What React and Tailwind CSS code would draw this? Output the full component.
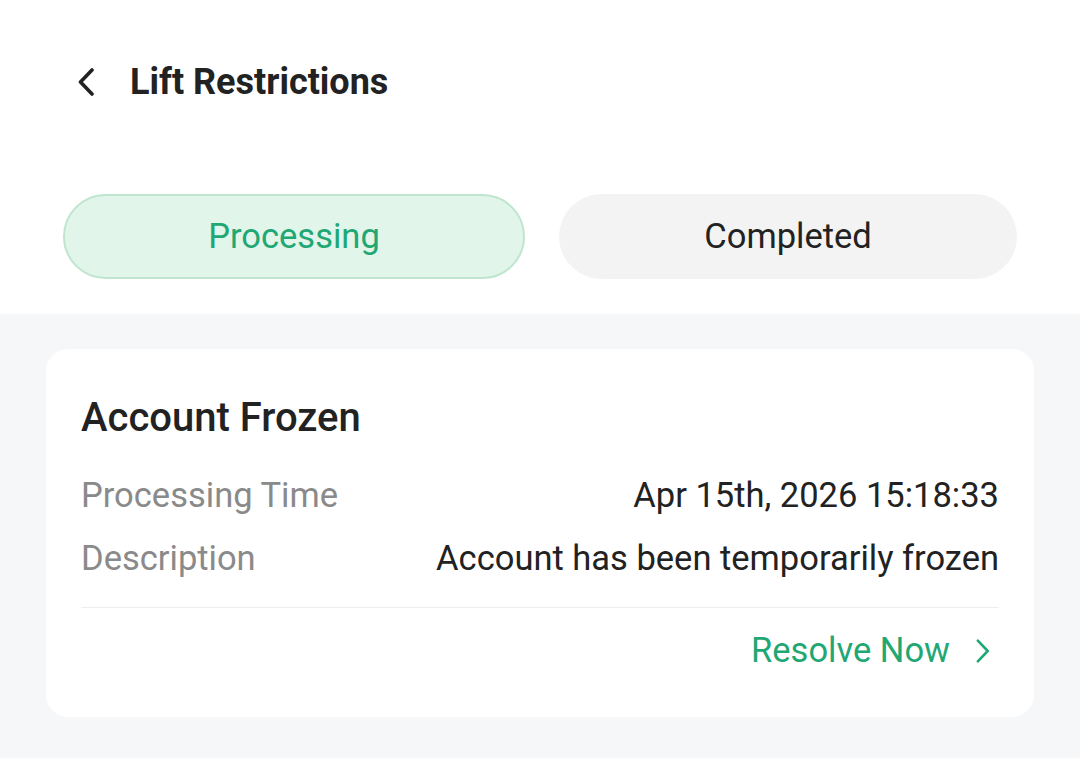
import React from 'react';

const Chevron = ({ dir = 'right', className = '', width = 3 }) => (
  <svg viewBox="0 0 16 28" className={className} fill="none" stroke="currentColor" strokeWidth={width} strokeLinecap="round" strokeLinejoin="round">
    {dir === 'left' ? <path d="M14 2 L2.5 14 L14 26" /> : <path d="M2 2 L13.5 14 L2 26" />}
  </svg>
);

const InfoRow = ({ label, value }) => (
  <div className="flex items-center justify-between leading-[63px]">
    <span className="text-[#8a8a8a]">{label}</span>
    <span className="text-[#222]">{value}</span>
  </div>
);

export default function App() {
  return (
    <div className="w-[1080px] h-[758px] bg-[#f6f7f9] font-['Roboto',sans-serif] text-[34.5px] overflow-hidden">
      {/* Header + tabs */}
      <div className="bg-white">
        <div className="h-[164px] flex items-center pl-[78px]">
          <Chevron dir="left" width={3.6} className="w-[16px] h-[28px] text-[#222]" />
          <h1 className="ml-[36px] font-bold text-[#222] text-[36px]">Lift Restrictions</h1>
        </div>
        <div className="flex gap-[34px] px-[63px] pt-[30px] pb-[35px]">
          <button className="flex-1 h-[85px] rounded-full bg-[#e1f5ea] border-2 border-[#bfe5cf] text-[#1fa774]">
            Processing
          </button>
          <button className="flex-1 h-[85px] rounded-full bg-[#f3f3f3] text-[#222]">
            Completed
          </button>
        </div>
      </div>

      {/* List */}
      <div className="px-[46px] pt-[35px]">
        <div className="bg-white rounded-[22px] px-[35px] pt-[47px] pb-[42px]">
          <h2 className="text-[40px] font-medium text-[#222] leading-[44px]">Account Frozen</h2>
          <div className="mt-[24px]">
            <InfoRow label="Processing Time" value="Apr 15th, 2026 15:18:33" />
            <InfoRow label="Description" value="Account has been temporarily frozen" />
          </div>
          <div className="mt-[17px] h-px bg-[#eeeeee]" />
          <div className="mt-[19px] h-[48px] flex items-center justify-end gap-[26px] pr-[9px] text-[#1fa774]">
            <span>Resolve Now</span>
            <Chevron width={3} className="w-[14px] h-[24px]" />
          </div>
        </div>
      </div>
    </div>
  );
}
